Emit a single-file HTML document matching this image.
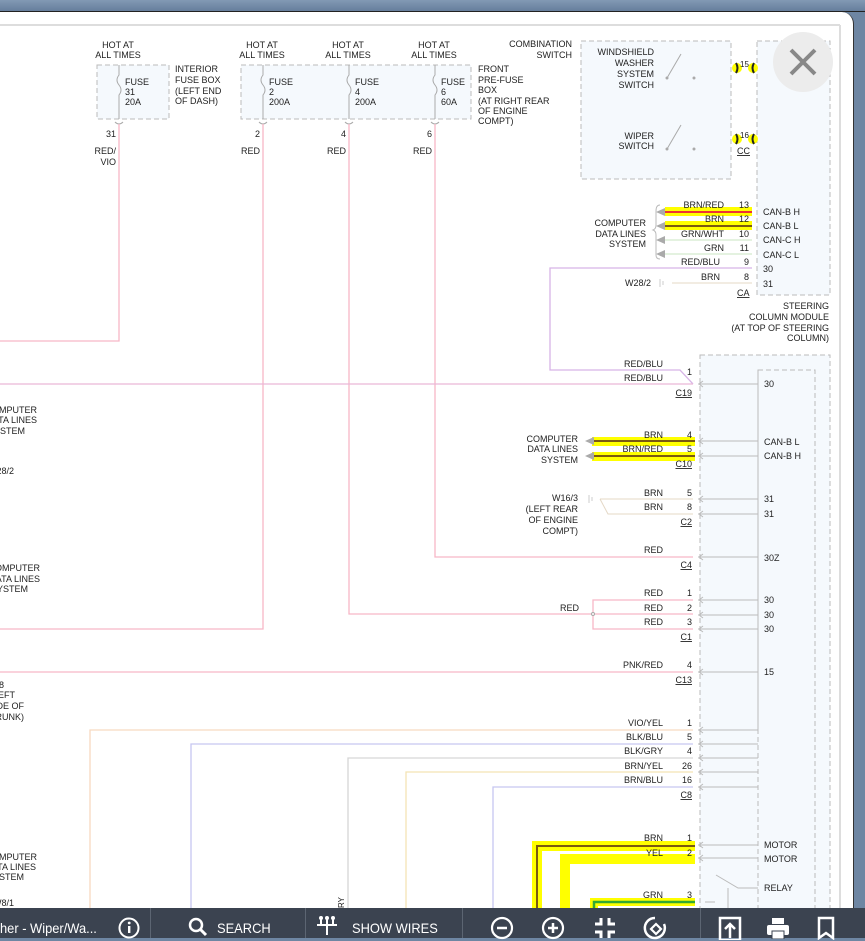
<!DOCTYPE html>
<html><head><meta charset="utf-8"><style>
html,body{margin:0;padding:0;width:865px;height:938px;overflow:hidden;background:#6e86a3;font-family:"Liberation Sans",Arial,sans-serif}
#top{position:absolute;left:0;top:0;width:865px;height:11px;background:linear-gradient(#8299b4,#667e9c);border-bottom:1px solid #222}
#panel{position:absolute;left:0;top:12px;width:853px;height:926px;background:#fff;border-top-right-radius:12px;border-right:1px solid #333}
#tb{position:absolute;left:0;top:908px;width:865px;height:30px;background:#3b4350;color:#fff;font-size:14px}
#tb .t{position:absolute;top:12px;white-space:nowrap;transform:scaleX(.92);transform-origin:left}
.sep{position:absolute;top:0;width:1px;height:30px;background:#5c6572}
svg text{font-family:"Liberation Sans",Arial,sans-serif;font-size:9px;fill:#222}
</style></head><body>
<div id="top"></div>
<div id="panel"></div>
<svg style="position:absolute;left:0;top:0" width="865" height="908">
<line x1="0" y1="25" x2="840" y2="25" stroke="#ddd" stroke-width="2"/>
<line x1="840" y1="25" x2="840" y2="908" stroke="#ddd" stroke-width="2"/>
<g fill="#f5f9fd" stroke="#bbb" stroke-dasharray="5,3">
<rect x="97" y="65" width="72" height="54"/>
<rect x="241" y="65" width="230" height="54"/>
<rect x="581" y="41" width="150" height="138"/>
<rect x="757" y="41" width="73" height="254"/>
<rect x="700" y="355" width="130" height="560"/>
<rect x="758" y="370" width="57" height="545"/>
</g>
<!-- highlights first -->
<rect x="665" y="207" width="87" height="9" fill="#ff0"/><rect x="665" y="221" width="87" height="9" fill="#ff0"/>
<line x1="665" y1="212" x2="752" y2="212" stroke="#e33" stroke-width="2"/>
<line x1="665" y1="226" x2="752" y2="226" stroke="#7a5a10" stroke-width="2"/>
<rect x="592" y="437" width="103" height="9" fill="#ff0"/><rect x="592" y="452" width="103" height="9" fill="#ff0"/>
<g stroke="#7a5a10" stroke-width="2"><line x1="592" y1="441" x2="695" y2="441"/><line x1="592" y1="456" x2="695" y2="456"/></g>
<g fill="#aaa"><path d="M585 441l9-4v8zM585 456l9-4v8z"/></g>
<g fill="none" stroke-width="1.3">
<path d="M90 938V730H693" stroke="#f8d9c0"/>
<path d="M191 938V744H693" stroke="#c6c6f0"/>
<path d="M348 938V758H693" stroke="#d6d6d6"/>
<path d="M406 938V772H693" stroke="#f3e3b5"/>
<path d="M493 938V787H693" stroke="#c6c6f0"/>
</g>
<path d="M537 908V846H695" fill="none" stroke="#ff0" stroke-width="10"/>
<path d="M537 908V846H695" fill="none" stroke="#7a5a10" stroke-width="2"/>
<path d="M565 908V859H695" fill="none" stroke="#ff0" stroke-width="10"/>
<path d="M594 908V902H695" fill="none" stroke="#ff0" stroke-width="8"/>
<path d="M594 908V902H695" fill="none" stroke="#3a3" stroke-width="2.5"/>
<g text-anchor="middle">
<text x="118" y="48">HOT AT</text><text x="118" y="58">ALL TIMES</text>
<text x="262" y="48">HOT AT</text><text x="262" y="58">ALL TIMES</text>
<text x="348" y="48">HOT AT</text><text x="348" y="58">ALL TIMES</text>
<text x="434" y="48">HOT AT</text><text x="434" y="58">ALL TIMES</text>
</g>
<g>
<text x="125" y="85">FUSE</text><text x="125" y="95">31</text><text x="125" y="105">20A</text>
<text x="269" y="85">FUSE</text><text x="269" y="95">2</text><text x="269" y="105">200A</text>
<text x="355" y="85">FUSE</text><text x="355" y="95">4</text><text x="355" y="105">200A</text>
<text x="441" y="85">FUSE</text><text x="441" y="95">6</text><text x="441" y="105">60A</text>
<text x="175" y="72">INTERIOR</text><text x="175" y="83">FUSE BOX</text><text x="175" y="94">(LEFT END</text><text x="175" y="104">OF DASH)</text>
<text x="478" y="72">FRONT</text><text x="478" y="83">PRE-FUSE</text><text x="478" y="93">BOX</text><text x="478" y="104">(AT RIGHT REAR</text><text x="478" y="114">OF ENGINE</text><text x="478" y="124">COMPT)</text>
</g>
<g text-anchor="end">
<text x="116" y="137">31</text><text x="116" y="154">RED/</text><text x="116" y="165">VIO</text>
<text x="260" y="137">2</text><text x="260" y="154">RED</text>
<text x="346" y="137">4</text><text x="346" y="154">RED</text>
<text x="432" y="137">6</text><text x="432" y="154">RED</text>
</g>
<g stroke="#aaa" fill="none">
<path d="M119 65v10q-4 5 0 10q4 5 0 10v24M263 65v10q-4 5 0 10q4 5 0 10v24M349 65v10q-4 5 0 10q4 5 0 10v24M435 65v10q-4 5 0 10q4 5 0 10v24"/>
<path d="M115 122q4 4 8 0M259 122q4 4 8 0M345 122q4 4 8 0M431 122q4 4 8 0"/>
</g>
<g stroke="#f7b7c7" fill="none" stroke-width="1.3">
<path d="M119 124V341H0"/>
<path d="M263 124V629H0"/>
<path d="M349 124V614H593"/>
<path d="M435 124V557H693"/>
<path d="M593 614L593 600H693M593 614H693M593 614V629H693"/>
<path d="M0 672H693"/>
</g>
<circle cx="593" cy="614" r="1.5" fill="#fff" stroke="#aaa"/>
<g text-anchor="end">
<text x="572" y="47">COMBINATION</text><text x="572" y="58">SWITCH</text>
<text x="654" y="55">WINDSHIELD</text><text x="654" y="66">WASHER</text><text x="654" y="77">SYSTEM</text><text x="654" y="88">SWITCH</text>
<text x="654" y="139">WIPER</text><text x="654" y="149">SWITCH</text>
</g>
<g stroke="#aaa" fill="#aaa"><line x1="667" y1="78" x2="681" y2="54"/><circle cx="667" cy="78" r="1"/><circle cx="694" cy="78" r="1"/>
<line x1="667" y1="149" x2="681" y2="125"/><circle cx="667" cy="149" r="1"/><circle cx="694" cy="149" r="1"/></g>
<g fill="#ff0"><circle cx="737" cy="68" r="5"/><circle cx="753" cy="68" r="5"/><circle cx="737" cy="139" r="5"/><circle cx="753" cy="139" r="5"/></g>
<g fill="none" stroke="#222" stroke-width="2"><path d="M736 63q3 5 0 10M754 63q-3 5 0 10M736 134q3 5 0 10M754 134q-3 5 0 10"/></g>
<text x="740" y="67" style="font-size:8px">15</text><text x="740" y="138" style="font-size:8px">16</text>
<text x="737" y="154" style="text-decoration:underline">CC</text>
<circle cx="803" cy="62" r="30" fill="#ececec"/>
<path d="M791 50L815 74M815 50L791 74" stroke="#888" stroke-width="4"/>
<g stroke="#c8e6c0"><line x1="665" y1="240" x2="752" y2="240"/><line x1="665" y1="254" x2="752" y2="254"/></g>
<g fill="#aaa"><path d="M656 212l9-4v8zM656 226l9-4v8zM656 240l9-4v8zM656 254l9-4v8z"/></g>
<path d="M660 205q-4 0-4 6v14q0 4-3 5q3 1 3 5v20q0 4 4 4" fill="none" stroke="#bbb"/>
<g text-anchor="end">
<text x="646" y="226">COMPUTER</text><text x="646" y="237">DATA LINES</text><text x="646" y="247">SYSTEM</text>
<text x="724" y="208">BRN/RED</text><text x="749" y="208">13</text>
<text x="724" y="222">BRN</text><text x="749" y="222">12</text>
<text x="724" y="237">GRN/WHT</text><text x="749" y="237">10</text>
<text x="724" y="251">GRN</text><text x="749" y="251">11</text>
<text x="720" y="265">RED/BLU</text><text x="749" y="265">9</text>
<text x="720" y="280">BRN</text><text x="749" y="280">8</text>
<text x="651" y="286">W28/2</text>
<text x="829" y="309">STEERING</text><text x="829" y="320">COLUMN MODULE</text><text x="829" y="331">(AT TOP OF STEERING</text><text x="829" y="341">COLUMN)</text>
</g>
<g><text x="763" y="215">CAN-B H</text><text x="763" y="229">CAN-B L</text><text x="763" y="243">CAN-C H</text><text x="763" y="258">CAN-C L</text><text x="763" y="272">30</text><text x="763" y="287">31</text>
<text x="737" y="296" style="text-decoration:underline">CA</text></g>
<path d="M752 268H550V370H680L693 384" stroke="#d7b4e6" fill="none" stroke-width="1.3"/>
<path d="M0 384H693" stroke="#eab6d6" stroke-width="1.3"/>
<path d="M672 283H752" stroke="#e4d8c6"/>
<g stroke="#ccc"><path d="M660 279v8M663 281v4"/></g>
<g stroke="#bbb" fill="none">
<path d="M758 384H698M758 441H698M758 456H698M758 499H698M758 514H698M758 557H698M758 600H698M758 615H698M758 629H698M758 672H698M758 730H698M758 744H698M758 758H698M758 772H698M758 787H698M758 845H698M758 858H698"/>
<path d="M703 381l-4 3l4 3M703 438l-4 3l4 3M703 453l-4 3l4 3M703 496l-4 3l4 3M703 511l-4 3l4 3M703 554l-4 3l4 3M703 597l-4 3l4 3M703 612l-4 3l4 3M703 626l-4 3l4 3M703 669l-4 3l4 3M703 727l-4 3l4 3M703 741l-4 3l4 3M703 755l-4 3l4 3M703 769l-4 3l4 3M703 784l-4 3l4 3M703 842l-4 3l4 3M703 855l-4 3l4 3"/>
<path d="M758 730V372M716 875L738 888H758M728 888V908M715 902H705"/>
</g>
<g>
<text x="764" y="387">30</text><text x="764" y="445">CAN-B L</text><text x="764" y="459">CAN-B H</text>
<text x="764" y="502">31</text><text x="764" y="517">31</text><text x="764" y="561">30Z</text>
<text x="764" y="603">30</text><text x="764" y="618">30</text><text x="764" y="632">30</text><text x="764" y="675">15</text>
<text x="764" y="848">MOTOR</text><text x="764" y="862">MOTOR</text><text x="764" y="891">RELAY</text>
</g>
<g text-anchor="end">
<text x="663" y="367">RED/BLU</text><text x="692" y="375">1</text><text x="663" y="381">RED/BLU</text>
<text x="692" y="396" style="text-decoration:underline">C19</text>
<text x="578" y="442">COMPUTER</text><text x="578" y="452">DATA LINES</text><text x="578" y="463">SYSTEM</text>
<text x="663" y="438">BRN</text><text x="692" y="438">4</text><text x="663" y="452">BRN/RED</text><text x="692" y="452">5</text>
<text x="692" y="467" style="text-decoration:underline">C10</text>
<text x="578" y="501">W16/3</text><text x="578" y="512">(LEFT REAR</text><text x="578" y="523">OF ENGINE</text><text x="578" y="534">COMPT)</text>
<text x="663" y="496">BRN</text><text x="692" y="496">5</text><text x="663" y="510">BRN</text><text x="692" y="510">8</text>
<text x="692" y="525" style="text-decoration:underline">C2</text>
<text x="663" y="553">RED</text><text x="692" y="568" style="text-decoration:underline">C4</text>
<text x="663" y="596">RED</text><text x="692" y="596">1</text><text x="579" y="611">RED</text><text x="663" y="611">RED</text><text x="692" y="611">2</text>
<text x="663" y="625">RED</text><text x="692" y="625">3</text><text x="692" y="640" style="text-decoration:underline">C1</text>
<text x="663" y="668">PNK/RED</text><text x="692" y="668">4</text><text x="692" y="683" style="text-decoration:underline">C13</text>
<text x="663" y="726">VIO/YEL</text><text x="692" y="726">1</text>
<text x="663" y="740">BLK/BLU</text><text x="692" y="740">5</text>
<text x="663" y="754">BLK/GRY</text><text x="692" y="754">4</text>
<text x="663" y="769">BRN/YEL</text><text x="692" y="769">26</text>
<text x="663" y="783">BRN/BLU</text><text x="692" y="783">16</text>
<text x="692" y="798" style="text-decoration:underline">C8</text>
<text x="663" y="841">BRN</text><text x="692" y="841">1</text>
<text x="663" y="856">YEL</text><text x="692" y="856">2</text>
<text x="663" y="898">GRN</text><text x="692" y="898">3</text>
</g>
<path d="M600 499H693M600 499L608 514H693" stroke="#e4d8c6" fill="none"/>
<g stroke="#ccc"><path d="M589 495v8M592 497v4"/></g>
<g text-anchor="end">
<text x="37" y="413">COMPUTER</text><text x="37" y="423">DATA LINES</text><text x="25" y="434">SYSTEM</text>
<text x="14" y="474">W28/2</text>
<text x="40" y="571">COMPUTER</text><text x="40" y="582">DATA LINES</text><text x="28" y="592">SYSTEM</text>
<text x="4" y="688">8</text><text x="15" y="698">LEFT</text><text x="24" y="709">SIDE OF</text><text x="24" y="720">TRUNK)</text>
<text x="37" y="860">COMPUTER</text><text x="36" y="870">DATA LINES</text><text x="24" y="880">SYSTEM</text>
<text x="14" y="906">W8/1</text>
</g>
<text transform="translate(344,908) rotate(-90)" style="font-size:8px">RY</text>
</svg>
<div id="tb">
<span class="t" style="left:0">her - Wiper/Wa...</span>
<svg style="position:absolute;left:118px;top:9px" width="22" height="22"><circle cx="11" cy="11" r="9.5" fill="none" stroke="#fff" stroke-width="2"/><rect x="10" y="9" width="2.4" height="7" fill="#fff"/><circle cx="11.2" cy="6" r="1.4" fill="#fff"/></svg>
<div class="sep" style="left:150px"></div>
<svg style="position:absolute;left:188px;top:9px" width="20" height="20"><circle cx="8" cy="8" r="6" fill="none" stroke="#fff" stroke-width="2.5"/><line x1="12" y1="12" x2="18" y2="18" stroke="#fff" stroke-width="3"/></svg>
<span class="t" style="left:217px">SEARCH</span>
<div class="sep" style="left:305px"></div>
<svg style="position:absolute;left:315px;top:7px" width="24" height="22"><path d="M2 10h20M12 10v10M6 10V3M12 10V3M18 10V3" stroke="#fff" stroke-width="2" fill="none"/><circle cx="6" cy="3" r="2" fill="#fff"/><circle cx="12" cy="3" r="2" fill="#fff"/><circle cx="18" cy="3" r="2" fill="#fff"/></svg>
<span class="t" style="left:352px">SHOW WIRES</span>
<div class="sep" style="left:462px"></div>
<svg style="position:absolute;left:490px;top:8px" width="24" height="24"><circle cx="12" cy="12" r="10" fill="none" stroke="#fff" stroke-width="2.2"/><path d="M7 12h10" stroke="#fff" stroke-width="2.5"/></svg>
<svg style="position:absolute;left:541px;top:8px" width="24" height="24"><circle cx="12" cy="12" r="10" fill="none" stroke="#fff" stroke-width="2.2"/><path d="M7 12h10M12 7v10" stroke="#fff" stroke-width="2.5"/></svg>
<svg style="position:absolute;left:593px;top:8px" width="24" height="24"><path d="M8 2v6H2M16 2v6h6M8 22v-6H2M16 22v-6h6" stroke="#fff" stroke-width="3" fill="none"/></svg>
<svg style="position:absolute;left:643px;top:7px" width="26" height="26"><path d="M12 3a10 10 0 1 0 9 6" stroke="#fff" stroke-width="2.5" fill="none"/><path d="M13 9l5 5-5 5-5-5z" stroke="#fff" stroke-width="2.2" fill="none"/></svg>
<div class="sep" style="left:700px"></div>
<svg style="position:absolute;left:718px;top:8px" width="24" height="24"><rect x="2" y="2" width="20" height="22" fill="none" stroke="#fff" stroke-width="2.5"/><path d="M12 22V9M7 13l5-5 5 5" stroke="#fff" stroke-width="2.5" fill="none"/></svg>
<svg style="position:absolute;left:766px;top:9px" width="24" height="22"><rect x="6" y="1" width="12" height="6" fill="#fff"/><rect x="1" y="8" width="22" height="10" rx="2" fill="#fff"/><rect x="6" y="14" width="12" height="8" fill="#fff" stroke="#3b4350"/></svg>
<svg style="position:absolute;left:817px;top:8px" width="18" height="24"><path d="M2 2h14v20l-7-5-7 5z" fill="none" stroke="#fff" stroke-width="2.5"/></svg>
</div>
</body></html>
